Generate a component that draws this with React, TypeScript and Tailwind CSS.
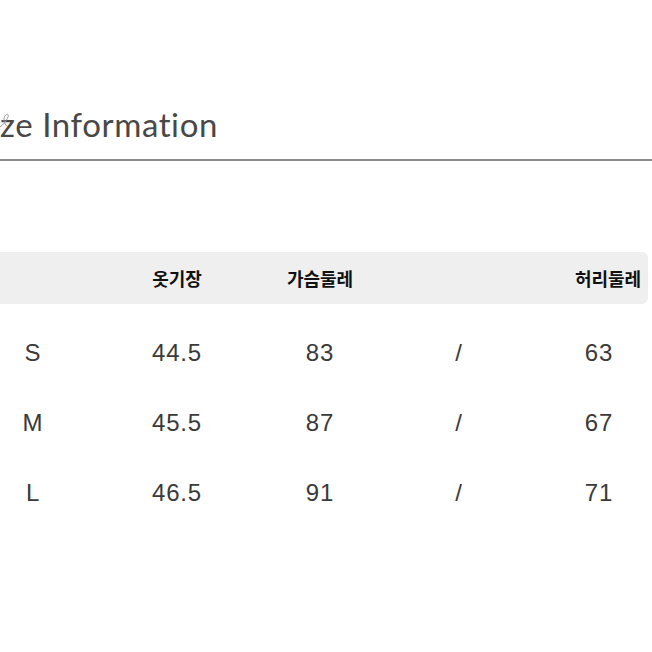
export default function App() {
  const rows = [
    { size: "S", length: "44.5", chest: "83", waist: "63" },
    { size: "M", length: "45.5", chest: "87", waist: "67" },
    { size: "L", length: "46.5", chest: "91", waist: "71" },
  ];

  const cols = "grid grid-cols-[66px_222px_64px_214px_66px]";

  return (
    <div className="w-[652px] h-[652px] bg-white overflow-hidden font-['Liberation_Sans',sans-serif]">
      {/* Title */}
      <div className="pt-[104px] h-[159px] flex items-start">
        <div className="relative flex items-end">
          <svg width="14" height="26" viewBox="0 0 14 26" className="absolute -left-[2px] top-[4px]" fill="none">
            <path d="M0 20 C4 18 8 14 10 9 C11 6 9 5 7 8 C5 11 6 16 9 18" stroke="#9a9a9a" strokeWidth="1" />
          </svg>
          <span className="font-['Lato',sans-serif] font-normal text-[33px] leading-[40px] text-[#484848] tracking-[0.6px]">
            ze Information
          </span>
        </div>
      </div>
      <div className="h-[2px] bg-[#8a8a8a]" />

      {/* Table */}
      <div className="mt-[91px]">
        <div className={`${cols} h-[52px] items-center bg-[#efefef] rounded-r-[6px] w-[648px] text-[18px] font-bold text-[#111] font-['Noto_Sans_CJK_KR',sans-serif]`}>
          <div />
          <div className="flex justify-center whitespace-nowrap">옷기장</div>
          <div className="flex justify-center whitespace-nowrap">가슴둘레</div>
          <div />
          <div className="flex justify-center whitespace-nowrap pl-[18px]">허리둘레</div>
        </div>

        <div className="mt-[14px]">
          {rows.map((r) => (
            <div key={r.size} className={`${cols} h-[70px] items-center text-[24px] tracking-[0.8px] text-[#3a3a3a]`}>
              <div className="flex justify-center">{r.size}</div>
              <div className="flex justify-center">{r.length}</div>
              <div className="flex justify-center">{r.chest}</div>
              <div className="flex justify-center">/</div>
              <div className="flex justify-center">{r.waist}</div>
            </div>
          ))}
        </div>
      </div>
    </div>
  );
}
